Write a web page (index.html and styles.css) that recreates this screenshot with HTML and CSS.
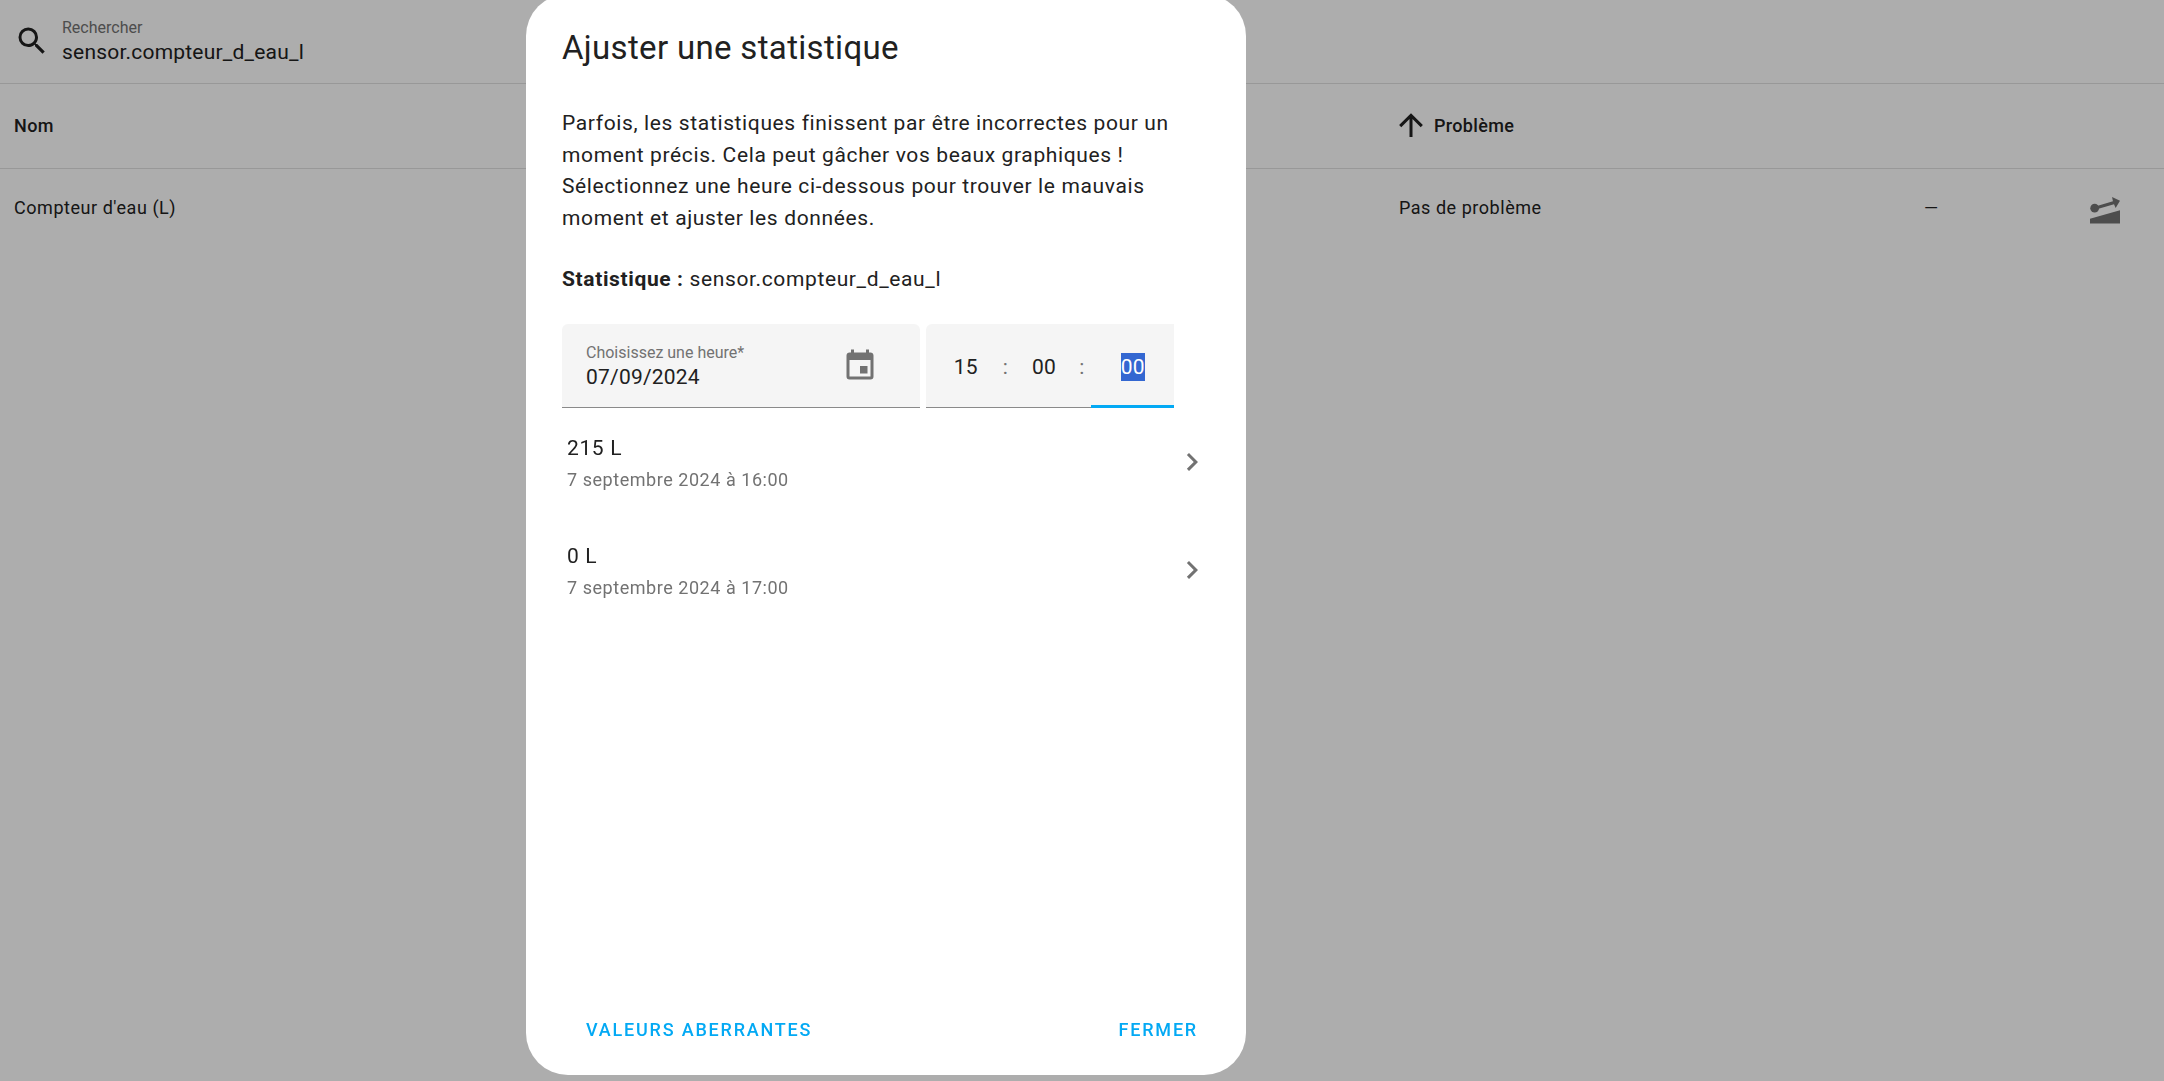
FILE: index.html
```
<!DOCTYPE html>
<html lang="fr">
<head>
    <meta charset="UTF-8">
    <meta name="viewport" content="width=device-width, initial-scale=1.0">
    <title>Statistiques</title>
    <link rel="stylesheet" href="styles.css">
</head>
<body>

    <main>
        <div class="search">
            <svg class="icon" viewBox="0 0 24 24"><path d="M9.5,3A6.5,6.5 0 0,1 16,9.5C16,11.11 15.41,12.59 14.44,13.73L14.71,14H15.5L20.5,19L19,20.5L14,15.5V14.71L13.73,14.44C12.59,15.41 11.11,16 9.5,16A6.5,6.5 0 0,1 3,9.5A6.5,6.5 0 0,1 9.5,3M9.5,5C7,5 5,7 5,9.5C5,12 7,14 9.5,14C12,14 14,12 14,9.5C14,7 12,5 9.5,5Z"/></svg>
            <div class="field-text">
                <label class="label" for="search">Rechercher</label>
                <input class="input" id="search" type="text" value="sensor.compteur_d_eau_l">
            </div>
        </div>

        <table class="table">
            <colgroup>
                <col class="col-name">
                <col class="col-issue">
                <col class="col-fix">
                <col class="col-adjust">
            </colgroup>
            <thead>
                <tr>
                    <th>Nom</th>
                    <th>
                        <div class="sorted">
                            <svg class="icon" viewBox="0 0 24 24"><path d="M13,20H11V8L5.5,13.5L4.08,12.08L12,4.16L19.92,12.08L18.5,13.5L13,8V20Z"/></svg>
                            Problème
                        </div>
                    </th>
                    <th></th>
                    <th></th>
                </tr>
            </thead>
            <tbody>
                <tr>
                    <td>Compteur d'eau (L)</td>
                    <td>Pas de problème</td>
                    <td>—</td>
                    <td>
                        <button class="icon-button" aria-label="Ajuster">
                            <svg class="icon" viewBox="0 0 24 24">
                                <path d="M2,17.9L22,12.1V21H2Z"/>
                                <circle cx="5.1" cy="10.8" r="2.9"/>
                                <path d="M5,9.8L17.3,6.2L16.7,3.4L22,5.9L19.1,10.6L18,8.2L5.4,11.8Z"/>
                            </svg>
                        </button>
                    </td>
                </tr>
            </tbody>
        </table>
    </main>

    <div class="scrim">
        <div class="dialog" role="dialog" aria-labelledby="title">
            <h2 class="title" id="title">Ajuster une statistique</h2>

            <div class="content">
                <p class="text">Parfois, les statistiques finissent par être incorrectes pour un moment précis. Cela peut gâcher vos beaux graphiques&nbsp;! Sélectionnez une heure ci-dessous pour trouver le mauvais moment et ajuster les données.</p>
                <p class="text"><b>Statistique&nbsp;:</b> sensor.compteur_d_eau_l</p>

                <div class="pickers">
                    <div class="date">
                        <div class="field-text">
                            <label class="label" for="date">Choisissez une heure*</label>
                            <input class="input" id="date" type="text" value="07/09/2024">
                        </div>
                        <svg class="icon grey" viewBox="0 0 24 24"><path d="M19,19H5V8H19M16,1V3H8V1H6V3H5C3.89,3 3,3.89 3,5V19A2,2 0 0,0 5,21H19A2,2 0 0,0 21,19V5C21,3.89 20.1,3 19,3H18V1M17,12H12V17H17V12Z"/></svg>
                    </div>
                    <div class="time">
                        <div class="segment hours">
                            <input class="input number" id="hours" type="text" value="15" aria-label="Heures">
                            <span class="colon">:</span>
                        </div>
                        <div class="segment minutes">
                            <input class="input number" id="minutes" type="text" value="00" aria-label="Minutes">
                            <span class="colon">:</span>
                        </div>
                        <div class="segment">
                            <input class="input number" id="seconds" type="text" value="00" aria-label="Secondes">
                        </div>
                    </div>
                </div>
            </div>

            <div class="list">
                <button class="item">
                    <span class="item-text">
                        <span class="primary">215 L</span>
                        <span class="secondary">7 septembre 2024 à 16:00</span>
                    </span>
                    <svg class="icon grey" viewBox="0 0 24 24"><path d="M8.59,16.58L13.17,12L8.59,7.41L10,6L16,12L10,18L8.59,16.58Z"/></svg>
                </button>
                <button class="item">
                    <span class="item-text">
                        <span class="primary">0 L</span>
                        <span class="secondary">7 septembre 2024 à 17:00</span>
                    </span>
                    <svg class="icon grey" viewBox="0 0 24 24"><path d="M8.59,16.58L13.17,12L8.59,7.41L10,6L16,12L10,18L8.59,16.58Z"/></svg>
                </button>
            </div>

            <div class="actions">
                <button class="action">Valeurs aberrantes</button>
                <button class="action">Fermer</button>
            </div>
        </div>
    </div>

    <script>
        // the seconds are selected when the dialog opens
        document.getElementById('seconds').select();
    </script>

</body>
</html>
```

FILE: styles.css
```
* {
    box-sizing: border-box;
}

body {
    margin: 0;
    background-color: white;
    color: #212121;
    font-family: Roboto, sans-serif;
    font-size: 21px;
}

button, input {
    margin: 0;
    padding: 0;
    border: none;
    background: none;
    color: inherit;
    font: inherit;
    letter-spacing: inherit;
}

button {
    cursor: pointer;
}

.icon {
    width: 36px;
    height: 36px;
    flex: none;
    display: block;
    fill: currentColor;
}

.grey {
    color: #727272;
}

/* search bar */
.search {
    display: flex;
    align-items: center;
    gap: 12px;
    height: 84px;
    padding: 0 14px 2px;
    border-bottom: 1px solid rgba(0, 0, 0, 0.12);
}

.field-text {
    display: flex;
    flex-direction: column;
    flex: 1;
    min-width: 0;
    padding-top: 2px;
}

.label {
    font-size: 16px;
    line-height: 20px;
    letter-spacing: normal;
    color: #727272;
}

.input {
    width: 100%;
    line-height: 28px;
    height: 28px;
    outline: none;
    letter-spacing: 0.01em;
}

/* table */
.table {
    width: 100%;
    table-layout: fixed;
    border-collapse: separate;
    border-spacing: 0;
    font-size: 18px;
}

.col-name {
    width: 64%;
}

.col-fix {
    width: 163px;
}

.col-adjust {
    width: 91px;
}

.table th {
    height: 85px;
    padding: 0 14px 2px;
    text-align: left;
    font-weight: 500;
    letter-spacing: 0.02em;
    border-bottom: 1px solid rgba(0, 0, 0, 0.12);
}

.table td {
    height: 78px;
    padding: 0 14px 2px;
    letter-spacing: 0.03em;
}

.sorted {
    display: flex;
    align-items: center;
    gap: 5px;
    margin-left: -6px;
}

.icon-button {
    display: block;
    padding-top: 5px;
    color: #727272;
}

/* dialog */
.scrim {
    position: fixed;
    inset: 0;
    display: flex;
    justify-content: center;
    padding-right: 392px;
    background-color: rgba(0, 0, 0, 0.32);
}

.dialog {
    display: flex;
    flex-direction: column;
    width: 720px;
    max-width: 100%;
    height: 100vh;
    margin-top: -6px;
    padding-top: 30px;
    border-radius: 42px;
    background-color: white;
    letter-spacing: 0.03em;
}

.title {
    margin: 0 36px 36px;
    font-size: 33px;
    line-height: 48px;
    font-weight: 400;
    letter-spacing: 0.01em;
}

.content {
    padding: 0 36px;
}

.text {
    margin: 0 0 30px;
    line-height: 1.5;
}

.pickers {
    display: flex;
    gap: 6px;
    height: 84px;
    margin-top: -2px;
    margin-right: 36px;
}

.date {
    display: flex;
    align-items: center;
    flex: 1;
    padding: 2px 42px 0 24px;
    border-radius: 6px 6px 0 0;
    border-bottom: 1px solid #8a8a8a;
    background-color: #f5f5f5;
}

.time {
    display: grid;
    grid-template-columns: repeat(3, 1fr);
    width: 248px;
    border-radius: 6px 0 0 0;
    background-color: #f5f5f5;
}

.segment {
    display: flex;
    align-items: center;
    padding-top: 3px;
    border-bottom: 1px solid #8a8a8a;
}

.segment:focus-within {
    border-bottom-color: #03a9f4;
    box-shadow: inset 0 -2px #03a9f4;
}

.hours {
    padding-left: 3px;
}

.minutes {
    padding-right: 6px;
}

.number {
    flex: 1;
    min-width: 0;
    text-align: center;
}

.number::selection {
    background-color: #3367d1;
    color: white;
}

.colon {
    width: 6px;
    color: #727272;
}

/* list */
.list {
    flex: 1;
}

.item {
    display: flex;
    align-items: center;
    width: 100%;
    height: 108px;
    padding: 0 36px 0 41px;
    text-align: left;
}

.item-text {
    display: flex;
    flex-direction: column;
    flex: 1;
    padding-top: 5px;
    line-height: 31px;
}

.secondary {
    font-size: 18px;
    letter-spacing: 0.03em;
    color: #727272;
}

/* footer */
.actions {
    display: flex;
    justify-content: space-between;
    padding: 18px 36px 19px 48px;
}

.action {
    height: 54px;
    padding: 0 12px;
    font-size: 18px;
    font-weight: 500;
    letter-spacing: 0.1em;
    text-transform: uppercase;
    color: #03a9f4;
}
```
